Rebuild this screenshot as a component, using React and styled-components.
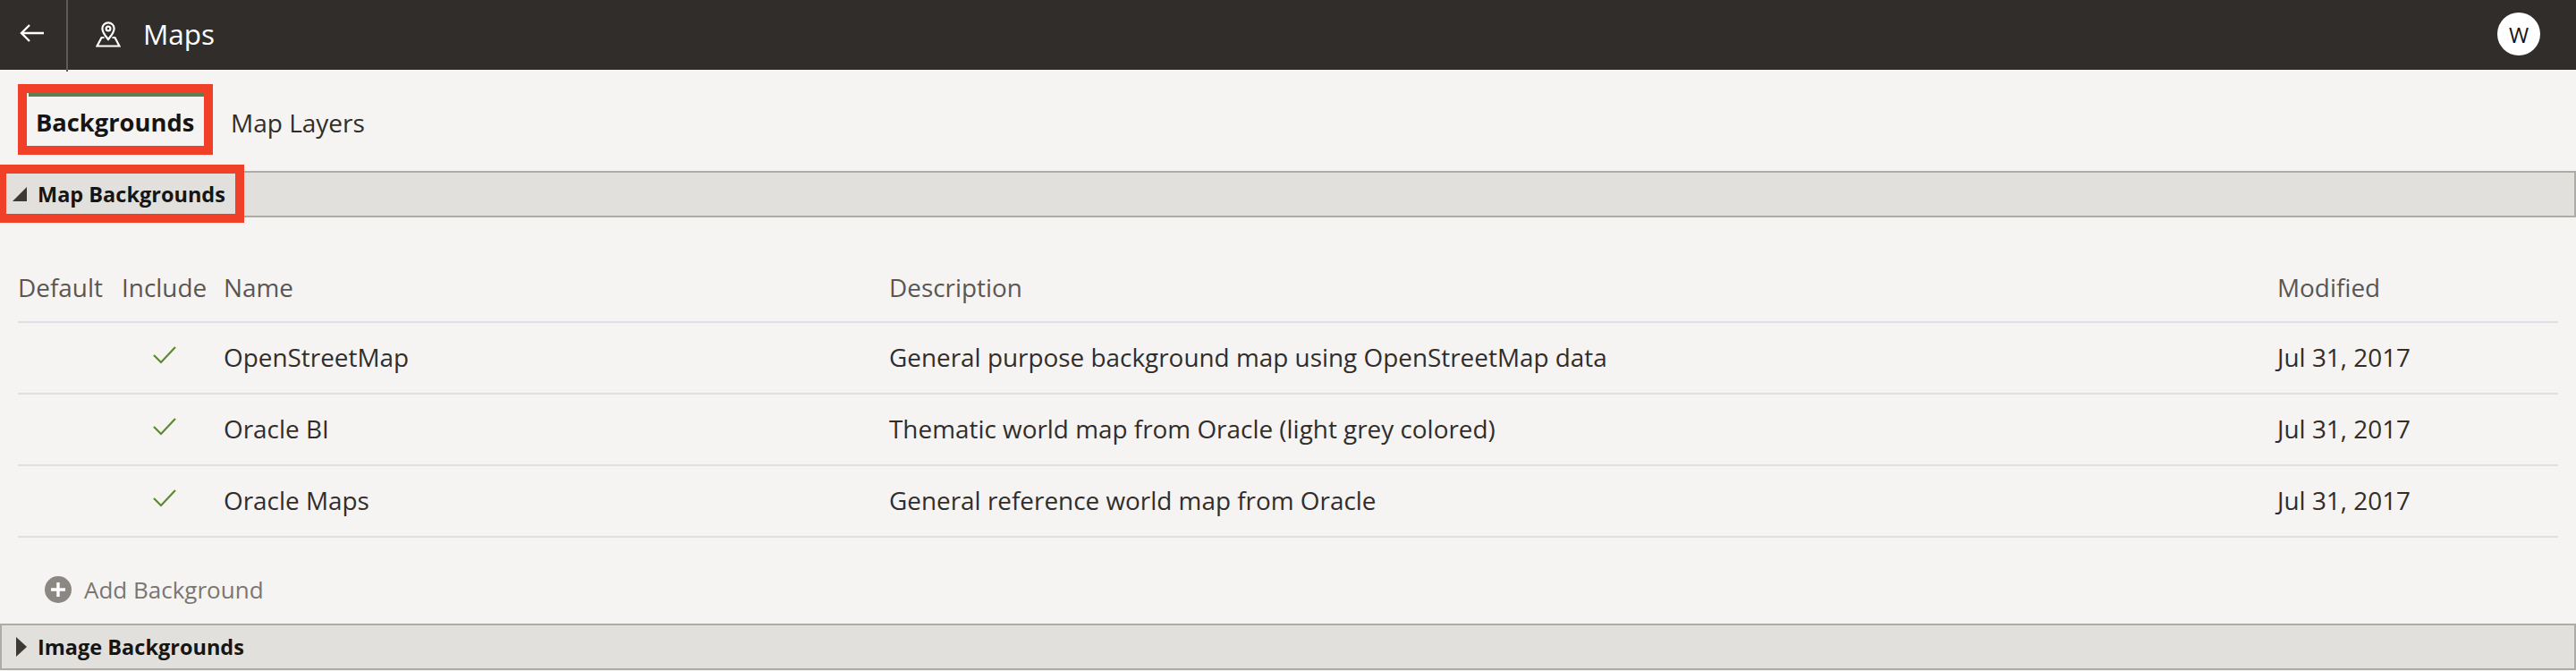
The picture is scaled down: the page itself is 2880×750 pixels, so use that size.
import React from "react";
import styled, { createGlobalStyle } from "styled-components";

const Global = createGlobalStyle`
  html, body { margin: 0; padding: 0; background: #f5f4f2; }
  body { font-family: "Open Sans", "Noto Sans", sans-serif; color: #312d2a; }
`;
const Page = styled.div`
  position: relative; width: 2880px; height: 750px; overflow: hidden; background: #f5f4f2;
`;
const Header = styled.header`
  height: 78px; background: #312d2a; display: flex; align-items: center; color: #fff;
`;
const BackCell = styled.div`
  width: 72px; height: 78px; border-right: 2px solid #5e5a57; display: flex; align-items: center; justify-content: center; padding-right: 2px; padding-bottom: 4px; box-sizing: content-box;
`;
const MapIcon = styled.svg`
  margin-left: 31px; width: 28px; height: 30px; margin-top: -3px;
`;
const Title = styled.h1`
  margin: 0 0 0 25px; font-size: 31.5px; font-weight: 400; line-height: 1; position: relative; top: -1px;
`;
const Spacer = styled.div` flex: 1; `;
const Avatar = styled.div`
  width: 48px; height: 48px; border-radius: 50%; background: #fff; color: #161513; margin-right: 40px; margin-top: -2px;
  display: flex; align-items: center; justify-content: center; font-size: 24px;
`;
const Tabs = styled.nav`
  height: 113px; display: flex; align-items: flex-start; padding: 26px 0 0 32px; box-sizing: border-box;
`;
const Tab = styled.div`
  width: ${p => p.$w}px; height: 59px; box-sizing: border-box; padding-left: ${p => p.$pad}px; line-height: 58px;
  font-size: ${p => (p.$active ? 27.3 : 28)}px;
  font-weight: ${p => (p.$active ? 700 : 400)}; color: ${p => (p.$active ? "#161513" : "#312d2a")};
  border-top: 4px solid ${p => (p.$active ? "#5f7d4f" : "transparent")};
`;
const Section = styled.div`
  height: 52px; box-sizing: border-box; border: 2px solid #aeaca6; background: #e1e0dc; display: flex; align-items: center;
  padding-left: ${p => p.$pad}px; font-size: 23.5px; font-weight: 700; color: #161513;
`;
const Arrow = styled.svg`
  flex: none; margin-right: ${p => p.$gap}px;
`;
const Table = styled.div`
  margin: 40px 20px 0 20px;
`;
const Row = styled.div`
  display: grid; grid-template-columns: 116px 114px 744px 1552px 1fr; height: ${p => p.$h}px; align-items: center;
  box-sizing: border-box; border-bottom: 2px solid ${p => (p.$head ? "#dbe1e6" : "#e0e1de")}; font-size: 27.9px;
  color: ${p => (p.$head ? "#5b5652" : "#312d2a")}; padding-bottom: ${p => (p.$head ? 0 : 2)}px;
`;
const Check = styled.svg`
  margin-left: 35px; margin-top: -4px; display: block;
`;
const Add = styled.div`
  display: flex; align-items: center; height: 96px; margin-left: 50px; gap: 14px; font-size: 26px; color: #7a7672; padding-top: 20px; box-sizing: border-box;
`;
const Mark = styled.div`
  position: absolute; box-sizing: border-box; border: 10px solid #f04028; left: ${p => p.$l}px; top: ${p => p.$t}px; width: ${p => p.$w}px; height: ${p => p.$h}px; pointer-events: none;
`;

const data = [
  ["OpenStreetMap", "General purpose background map using OpenStreetMap data"],
  ["Oracle BI", "Thematic world map from Oracle (light grey colored)"],
  ["Oracle Maps", "General reference world map from Oracle"],
];

export default function App() {
  return (
    <Page>
      <Global />
      <Header>
        <BackCell>
          <svg width="30" height="24" viewBox="0 0 30 24" fill="none" stroke="#fff" strokeWidth="2.4">
            <path d="M28 12H3M12 3l-9 9 9 9" />
          </svg>
        </BackCell>
        <MapIcon viewBox="0 0 28 30" fill="none" stroke="#fff" strokeWidth="2.2">
          <path d="M14 21c-3.4-4.4-6.6-7.6-6.6-12a6.6 6.6 0 0 1 13.2 0c0 4.4-3.2 7.6-6.6 12z" />
          <circle cx="14" cy="9" r="2.4" />
          <path d="M9.5 19H6.5L1.5 28.5h25L21.5 19h-3" />
        </MapIcon>
        <Title>Maps</Title>
        <Spacer />
        <Avatar>W</Avatar>
      </Header>
      <Tabs>
        <Tab $active $w={196} $pad={8}>Backgrounds</Tab>
        <Tab $w={200} $pad={30}>Map Layers</Tab>
      </Tabs>
      <Section $pad={12}>
        <Arrow $gap={12} width="16" height="16" viewBox="0 0 16 16"><path d="M0 16L16 0v16z" fill="#3d3935" /></Arrow>
        Map Backgrounds
      </Section>
      <Table>
        <Row $head $h={78}>
          <span>Default</span><span>Include</span><span>Name</span><span>Description</span><span>Modified</span>
        </Row>
        {data.map(([n, d]) => (
          <Row key={n} $h={80}>
            <span />
            <Check width="26" height="20" viewBox="0 0 26 20" fill="none" stroke="#5b8a32" strokeWidth="2.2"><path d="M1 10l8 8L25 1" /></Check>
            <span>{n}</span><span>{d}</span><span>Jul 31, 2017</span>
          </Row>
        ))}
      </Table>
      <Add>
        <svg width="30" height="30" viewBox="0 0 30 30"><circle cx="15" cy="15" r="15" fill="#8b8782" /><path d="M15 7v16M7 15h16" stroke="#fff" strokeWidth="3.4" /></svg>
        Add Background
      </Add>
      <Section $pad={16}>
        <Arrow $gap={12} width="12" height="22" viewBox="0 0 12 22"><path d="M0 0l12 11L0 22z" fill="#3d3935" /></Arrow>
        Image Backgrounds
      </Section>
      <Mark $l={20} $t={94} $w={218} $h={79} />
      <Mark $l={-3} $t={184} $w={276} $h={65} />
    </Page>
  );
}
